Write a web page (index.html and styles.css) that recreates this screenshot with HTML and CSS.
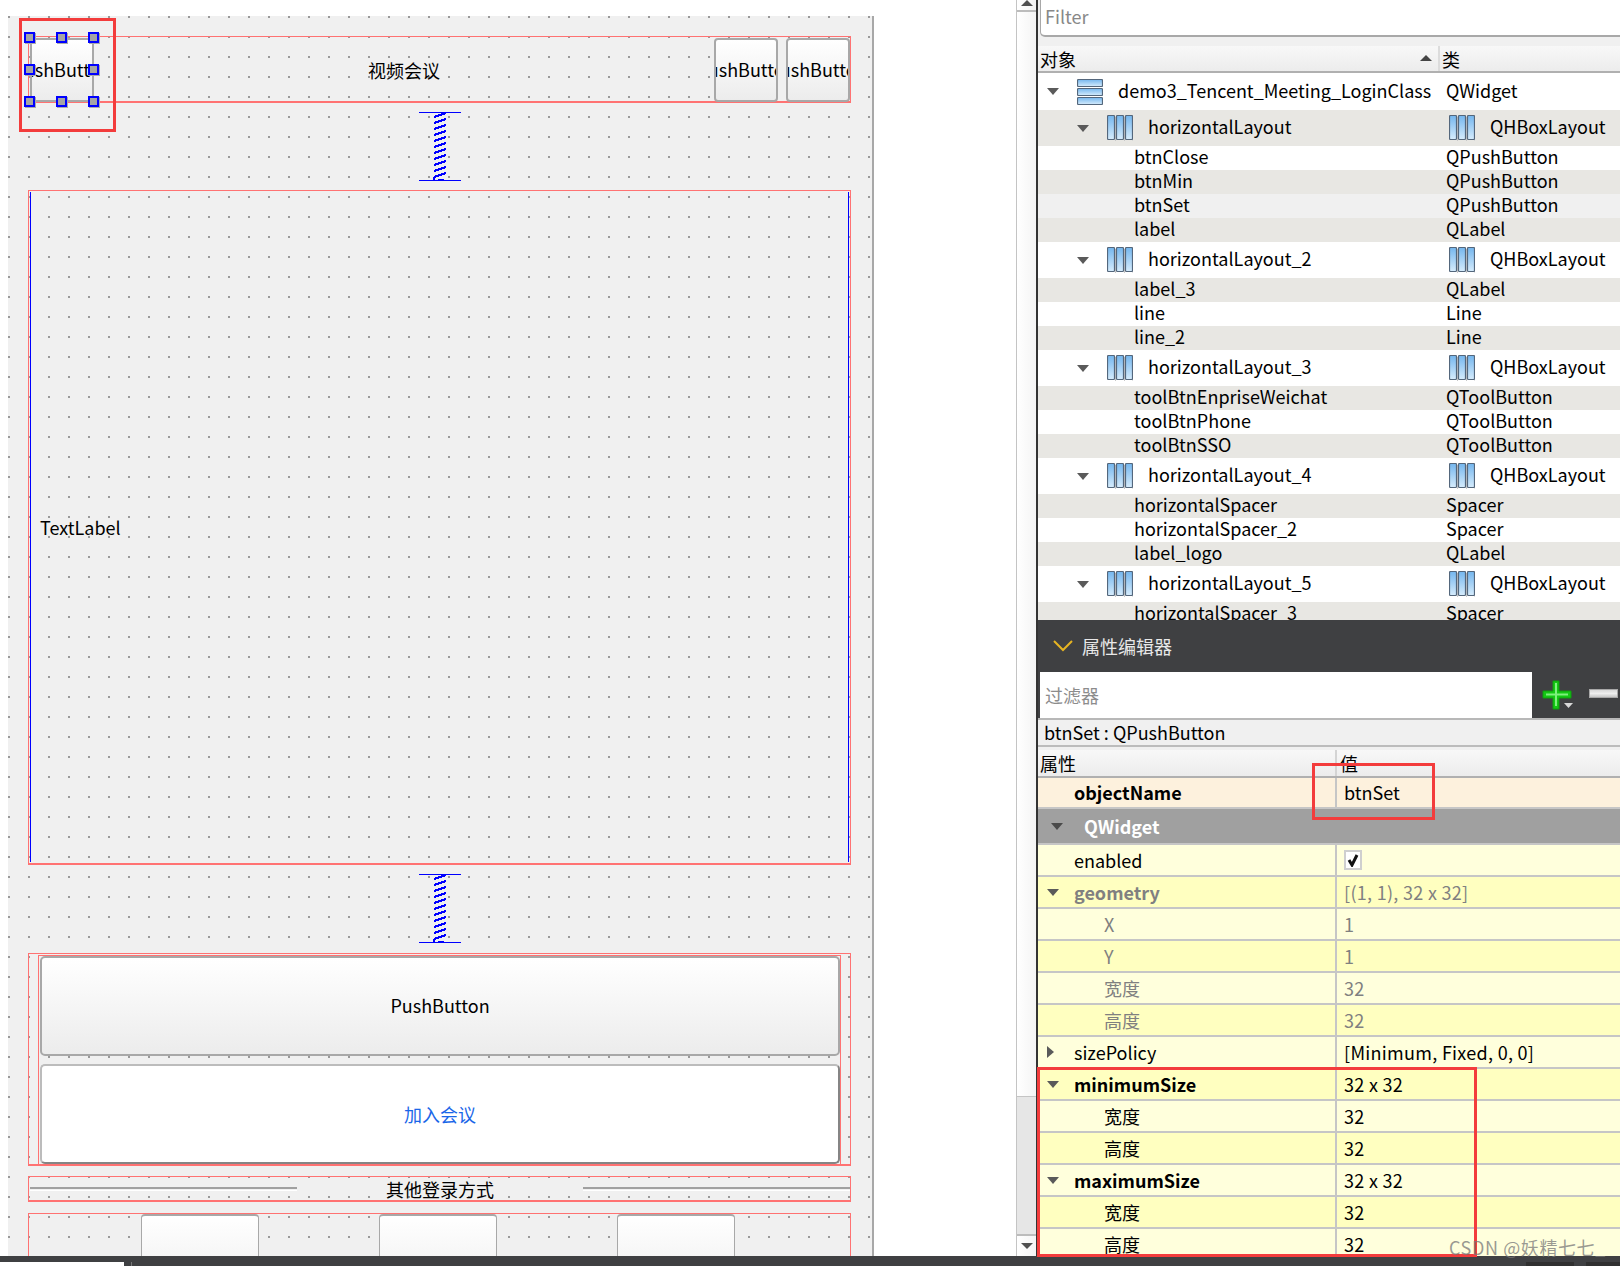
FILE: index.html
```html
<!DOCTYPE html>
<html lang="zh-CN">
<head>
    <meta charset="UTF-8">
    <title>Qt Designer</title>
    <link rel="stylesheet" href="styles.css">
</head>
<body>
    <svg class="defs" width="0" height="0">
        <defs>
            <linearGradient id="barH" x1="0" x2="0" y1="0" y2="1">
                <stop offset="0" stop-color="#74b6ee"/>
                <stop offset="1" stop-color="#d6ecfc"/>
            </linearGradient>
            <linearGradient id="barV" x1="0" x2="0" y1="0" y2="1">
                <stop offset="0" stop-color="#74b6ee"/>
                <stop offset="1" stop-color="#d6ecfc"/>
            </linearGradient>
            <symbol id="hbox" viewBox="0 0 26 26">
                <path d="M8.5 2V26M17.5 2V26M26 2V26" stroke="#c8c8c8" fill="none"/>
                <rect x="0.5" y="0.5" width="7" height="24" rx="1" fill="url(#barH)" stroke="#54677c" stroke-width="1.2"/>
                <rect x="9.5" y="0.5" width="7" height="24" rx="1" fill="url(#barH)" stroke="#54677c" stroke-width="1.2"/>
                <rect x="18.5" y="0.5" width="7" height="24" rx="1" fill="url(#barH)" stroke="#54677c" stroke-width="1.2"/>
            </symbol>
            <symbol id="vbox" viewBox="0 0 26 26">
                <rect x="0.5" y="0.5" width="25" height="7" rx="1" fill="url(#barV)" stroke="#54677c" stroke-width="1.2"/>
                <rect x="0.5" y="9.5" width="25" height="7" rx="1" fill="url(#barV)" stroke="#54677c" stroke-width="1.2"/>
                <rect x="0.5" y="18.5" width="25" height="7" rx="1" fill="url(#barV)" stroke="#54677c" stroke-width="1.2"/>
            </symbol>
            <symbol id="coil" viewBox="0 0 42 69">
                <path d="M0 0.5H42M0 68.5H42" stroke="#0000ff" fill="none"/>
                <path d="M15 5L27 1M15 11L27 7M15 17L27 13M15 23L27 19M15 29L27 25M15 35L27 31M15 41L27 37M15 47L27 43M15 53L27 49M15 59L27 55M15 65L27 61M15 65V68M19 68H25" stroke="#0000ff" stroke-width="2" fill="none" shape-rendering="crispEdges"/>
            </symbol>
        </defs>
    </svg>

    <div class="workspace">
        <!-- Form being edited -->
        <div class="form-area">
            <div class="form">
                <div class="title-layout">
                    <div class="selected">
                        <div class="push small"><span>PushButton</span></div>
                        <i class="handle h-tl"></i><i class="handle h-tc"></i><i class="handle h-tr"></i>
                        <i class="handle h-ml"></i><i class="handle h-mr"></i>
                        <i class="handle h-bl"></i><i class="handle h-bc"></i><i class="handle h-br"></i>
                    </div>
                    <div class="title-label">视频会议</div>
                    <div class="push small"><span>PushButton</span></div>
                    <div class="push small"><span>PushButton</span></div>
                </div>

                <svg class="spacer"><use href="#coil"/></svg>

                <div class="logo-layout">
                    <div class="logo-label">TextLabel</div>
                </div>

                <svg class="spacer spacer-low"><use href="#coil"/></svg>

                <div class="buttons-outer">
                    <div class="buttons-inner">
                        <div class="push big"><span>PushButton</span></div>
                        <div class="push big join"><span>加入会议</span></div>
                    </div>
                </div>

                <div class="other-layout">
                    <div class="other-line"></div>
                    <div class="other-label">其他登录方式</div>
                    <div class="other-line"></div>
                </div>

                <div class="tools-layout">
                    <div class="tool-btn"></div>
                    <div class="tool-btn"></div>
                    <div class="tool-btn"></div>
                </div>
            </div>
        </div>

        <!-- Scrollbar of the dock -->
        <div class="scrollbar">
            <div class="scroll-up"></div>
            <div class="scroll-track"></div>
            <div class="scroll-thumb"></div>
            <div class="scroll-down"></div>
        </div>

        <!-- Object inspector and property editor -->
        <div class="docks">
            <div class="inspector">
                <div class="filter-box"><div class="filter-input">Filter</div></div>
                <div class="head tree-head">
                    <div class="head-object">对象<i class="sort-arrow"></i></div>
                    <div class="head-class">类</div>
                </div>

                <div class="row root">
                    <div class="cell-name"><i class="arrow"></i><svg class="ico"><use href="#vbox"/></svg><span>demo3_Tencent_Meeting_LoginClass</span></div>
                    <div class="cell-class">QWidget</div>
                </div>
                <div class="row lay alt">
                    <div class="cell-name"><i class="arrow"></i><svg class="ico"><use href="#hbox"/></svg><span>horizontalLayout</span></div>
                    <div class="cell-class"><svg class="ico-class"><use href="#hbox"/></svg><span>QHBoxLayout</span></div>
                </div>
                <div class="row kid"><div class="cell-name">btnClose</div><div class="cell-class">QPushButton</div></div>
                <div class="row kid alt"><div class="cell-name">btnMin</div><div class="cell-class">QPushButton</div></div>
                <div class="row kid sel"><div class="cell-name">btnSet</div><div class="cell-class">QPushButton</div></div>
                <div class="row kid alt"><div class="cell-name">label</div><div class="cell-class">QLabel</div></div>
                <div class="row lay">
                    <div class="cell-name"><i class="arrow"></i><svg class="ico"><use href="#hbox"/></svg><span>horizontalLayout_2</span></div>
                    <div class="cell-class"><svg class="ico-class"><use href="#hbox"/></svg><span>QHBoxLayout</span></div>
                </div>
                <div class="row kid alt"><div class="cell-name">label_3</div><div class="cell-class">QLabel</div></div>
                <div class="row kid"><div class="cell-name">line</div><div class="cell-class">Line</div></div>
                <div class="row kid alt"><div class="cell-name">line_2</div><div class="cell-class">Line</div></div>
                <div class="row lay">
                    <div class="cell-name"><i class="arrow"></i><svg class="ico"><use href="#hbox"/></svg><span>horizontalLayout_3</span></div>
                    <div class="cell-class"><svg class="ico-class"><use href="#hbox"/></svg><span>QHBoxLayout</span></div>
                </div>
                <div class="row kid alt"><div class="cell-name">toolBtnEnpriseWeichat</div><div class="cell-class">QToolButton</div></div>
                <div class="row kid"><div class="cell-name">toolBtnPhone</div><div class="cell-class">QToolButton</div></div>
                <div class="row kid alt"><div class="cell-name">toolBtnSSO</div><div class="cell-class">QToolButton</div></div>
                <div class="row lay">
                    <div class="cell-name"><i class="arrow"></i><svg class="ico"><use href="#hbox"/></svg><span>horizontalLayout_4</span></div>
                    <div class="cell-class"><svg class="ico-class"><use href="#hbox"/></svg><span>QHBoxLayout</span></div>
                </div>
                <div class="row kid alt"><div class="cell-name">horizontalSpacer</div><div class="cell-class">Spacer</div></div>
                <div class="row kid"><div class="cell-name">horizontalSpacer_2</div><div class="cell-class">Spacer</div></div>
                <div class="row kid alt"><div class="cell-name">label_logo</div><div class="cell-class">QLabel</div></div>
                <div class="row lay">
                    <div class="cell-name"><i class="arrow"></i><svg class="ico"><use href="#hbox"/></svg><span>horizontalLayout_5</span></div>
                    <div class="cell-class"><svg class="ico-class"><use href="#hbox"/></svg><span>QHBoxLayout</span></div>
                </div>
                <div class="row kid alt"><div class="cell-name">horizontalSpacer_3</div><div class="cell-class">Spacer</div></div>
            </div>

            <div class="editor">
                <div class="dock-title">
                    <svg class="chevron" width="20" height="12" viewBox="0 0 20 12"><path d="M1 1L10 10L19 1" fill="none" stroke="#e6b422" stroke-width="2"/></svg>
                    <span>属性编辑器</span>
                </div>
                <div class="dock-filter">
                    <div class="filter-white">过滤器</div>
                    <svg class="plus" width="32" height="30" viewBox="0 0 32 30">
                        <path d="M11 1H17V11H29V18H17V29H11V18H1V11H11Z" fill="#14c814" stroke="#0f9e0f"/>
                        <path d="M14 3V26M4 14.5H26" stroke="#7df07d" stroke-width="2" fill="none"/>
                        <path d="M22 23H31L26.5 28Z" fill="#d8d8d8"/>
                    </svg>
                    <div class="minus"></div>
                </div>
                <div class="obj-name">btnSet : QPushButton</div>
                <div class="head prop-head">
                    <div class="head-prop">属性</div>
                    <div class="head-value">值</div>
                </div>

                <div class="prop object-name"><div class="prop-name bold no-arrow">objectName</div><div class="prop-value">btnSet</div></div>
                <div class="prop group"><i class="arrow"></i><span>QWidget</span></div>
                <div class="prop light"><div class="prop-name no-arrow">enabled</div><div class="prop-value"><span class="check"><svg width="12" height="14" viewBox="0 0 12 14"><path d="M2 7L5 12L10 2" fill="none" stroke="#111" stroke-width="3"/></svg></span></div></div>
                <div class="prop strong off"><div class="prop-name bold"><i class="arrow"></i><span>geometry</span></div><div class="prop-value">[(1, 1), 32 x 32]</div></div>
                <div class="prop light off"><div class="prop-name sub">X</div><div class="prop-value">1</div></div>
                <div class="prop strong off"><div class="prop-name sub">Y</div><div class="prop-value">1</div></div>
                <div class="prop light off"><div class="prop-name sub">宽度</div><div class="prop-value">32</div></div>
                <div class="prop strong off"><div class="prop-name sub">高度</div><div class="prop-value">32</div></div>
                <div class="prop light"><div class="prop-name"><i class="arrow closed"></i><span>sizePolicy</span></div><div class="prop-value">[Minimum, Fixed, 0, 0]</div></div>
                <div class="prop strong"><div class="prop-name bold"><i class="arrow"></i><span>minimumSize</span></div><div class="prop-value">32 x 32</div></div>
                <div class="prop light"><div class="prop-name sub">宽度</div><div class="prop-value">32</div></div>
                <div class="prop strong"><div class="prop-name sub">高度</div><div class="prop-value">32</div></div>
                <div class="prop light"><div class="prop-name bold"><i class="arrow"></i><span>maximumSize</span></div><div class="prop-value">32 x 32</div></div>
                <div class="prop strong"><div class="prop-name sub">宽度</div><div class="prop-value">32</div></div>
                <div class="prop light"><div class="prop-name sub">高度</div><div class="prop-value">32</div></div>
            </div>
        </div>
    </div>

    <div class="statusbar">
        <div class="status-white"></div>
        <div class="status-sep"></div>
        <div class="status-patch first-patch"></div>
        <div class="status-patch last-patch"></div>
    </div>

    <!-- Red marks drawn over the screenshot -->
    <div class="mark mark-button"></div>
    <div class="mark mark-name"></div>
    <div class="mark mark-size"></div>
    <div class="watermark">CSDN @妖精七七_</div>
</body>
</html>
```

FILE: styles.css
```css
/* Page */
body {
    margin: 0;
    width: 1620px;
    height: 1266px;
    overflow: hidden;
    position: relative;
    background: #fff;
    color: #000;
    font-family: "Noto Sans CJK SC", "Noto Sans", sans-serif;
    font-size: 18px;
    line-height: 24px;
}

.defs {
    position: absolute;
}

.workspace {
    display: flex;
    height: 1256px;
}

/* Form canvas */
.form-area {
    width: 1016px;
    padding: 16px 0 0 8px;
    box-sizing: border-box;
}

.form {
    width: 866px;
    height: 1240px;
    box-sizing: border-box;
    padding: 20px 21px 0 20px;
    border-right: 2px solid #a8a8a8;
    overflow: hidden;
    background-color: #f0f0f0;
    background-image: conic-gradient(from 270deg at 2px 2px, #999 25%, transparent 0);
    background-size: 20px 20px;
}

.title-layout {
    display: flex;
    height: 67px;
    box-sizing: border-box;
    padding: 1px 0 1px 1px;
    border: 1px solid #ff7272;
    border-bottom-width: 2px;
}

.title-label {
    flex: 1;
    text-align: center;
    line-height: 64px;
}

.push {
    display: flex;
    justify-content: center;
    align-items: center;
    box-sizing: border-box;
    overflow: hidden;
    white-space: nowrap;
    border: 2px solid #a8a8a8;
    border-radius: 4px;
    background: linear-gradient(#fff, #ececec);
}

.push.small {
    width: 64px;
    height: 64px;
    flex: none;
}

.push.small span {
    margin-bottom: 2px;
}

.push.small + .push.small {
    margin-left: 8px;
}

.selected {
    position: relative;
    width: 64px;
    height: 64px;
}

.selected .push {
    border-radius: 0;
}

.handle {
    position: absolute;
    width: 11px;
    height: 11px;
    box-sizing: border-box;
    border: 2px solid #0000ff;
    background: #a5a5a5;
    box-shadow: 1px 1px 0 #aaa;
}

.h-tl { left: -6px; top: -6px; }
.h-tc { left: 26px; top: -6px; }
.h-tr { left: 58px; top: -6px; }
.h-ml { left: -6px; top: 26px; }
.h-mr { left: 58px; top: 26px; }
.h-bl { left: -6px; top: 58px; }
.h-bc { left: 26px; top: 58px; }
.h-br { left: 58px; top: 58px; }

.spacer {
    display: block;
    width: 42px;
    height: 69px;
    margin: 9px 0 9px 391px;
}

.spacer-low {
    margin-bottom: 10px;
}

.logo-layout {
    height: 675px;
    box-sizing: border-box;
    padding: 1px;
    border: 1px solid #ff7272;
    border-bottom-width: 2px;
}

.logo-label {
    height: 100%;
    display: flex;
    align-items: center;
    padding-left: 9px;
    border-left: 1px solid #0000ff;
    border-right: 1px solid #0000ff;
}

.buttons-outer {
    height: 213px;
    box-sizing: border-box;
    padding: 1px 9px 0;
    border: 1px solid #ff7272;
    border-bottom-width: 2px;
}

.buttons-inner {
    display: flex;
    flex-direction: column;
    gap: 8px;
    height: 100%;
    box-sizing: border-box;
    padding-left: 1px;
    border: 1px solid #ff7272;
    border-bottom: 0;
}

.push.big {
    height: 100px;
    flex: none;
    border-radius: 5px;
}

.push.big span {
    margin-bottom: 2px;
}

.push.join {
    background: #fff;
    color: #1a66e8;
    border-color: #bcbcbc #858585 #858585 #bcbcbc;
}

.push.big.join span {
    margin-bottom: 0;
}

.other-layout {
    display: flex;
    height: 26px;
    margin-top: 10px;
    box-sizing: border-box;
    padding: 0 0 0 1px;
    border: 1px solid #ff7272;
    border-bottom-width: 2px;
}

.other-line {
    width: 267px;
    height: 1px;
    margin-top: 10px;
    border-top: 2px solid #a0a0a0;
    border-bottom: 1px solid #fff;
}

.other-label {
    flex: 1;
    text-align: center;
    line-height: 25px;
    white-space: nowrap;
}

.tools-layout {
    display: flex;
    gap: 120px;
    height: 100px;
    margin-top: 11px;
    box-sizing: border-box;
    padding-left: 112px;
    border: 1px solid #ff7272;
}

.tool-btn {
    width: 118px;
    height: 90px;
    box-sizing: border-box;
    border: 1px solid #a8a8a8;
    border-top-width: 2px;
    border-radius: 4px;
    background: linear-gradient(#fff, #ececec);
}

/* Scrollbar next to the docks */
.scrollbar {
    display: flex;
    flex-direction: column;
    width: 20px;
    box-sizing: border-box;
    border-left: 1px solid #c4c4c4;
    background: linear-gradient(to right, #fff, #f4f4f4);
}

.scroll-up {
    height: 10px;
    border-bottom: 2px solid #bcbcbc;
    position: relative;
}

.scroll-up::after {
    content: "";
    position: absolute;
    left: 4px;
    top: 0;
    border: 6px solid transparent;
    border-top: 0;
    border-bottom-color: #505050;
}

.scroll-track {
    flex: 1;
}

.scroll-thumb {
    height: 140px;
    background: #e6e6e6;
    border-top: 1px solid #c4c4c4;
    border-bottom: 2px solid #bcbcbc;
    box-sizing: border-box;
}

.scroll-down {
    height: 20px;
    position: relative;
}

.scroll-down::after {
    content: "";
    position: absolute;
    left: 4px;
    top: 7px;
    border: 6px solid transparent;
    border-bottom: 0;
    border-top-color: #505050;
}

/* Docks */
.docks {
    flex: 1;
    min-width: 0;
    border-left: 2px solid #333;
    background: #f0f0f0;
}

.inspector {
    height: 620px;
    overflow: hidden;
    background: #fff;
}

.filter-box {
    height: 46px;
    padding-left: 2px;
    box-sizing: border-box;
    background: #f0f0f0;
}

.filter-input {
    height: 37px;
    box-sizing: border-box;
    padding-left: 4px;
    line-height: 32px;
    color: #888;
    background: #fff;
    border-left: 1px solid #a8a8a8;
    border-bottom: 2px solid #a8a8a8;
    border-bottom-left-radius: 5px;
}

.head {
    display: flex;
    box-sizing: border-box;
    border-bottom: 2px solid #b0b0b0;
    background: linear-gradient(#f8f8f8, #ececec);
}

.tree-head {
    height: 27px;
}

.head-object {
    position: relative;
    width: 402px;
    box-sizing: border-box;
    padding-left: 2px;
    line-height: 26px;
    border-right: 2px solid #dcdcdc;
}

.sort-arrow {
    position: absolute;
    right: 6px;
    top: 9px;
    border: 6px solid transparent;
    border-top: 0;
    border-bottom-color: #444;
}

.head-class {
    padding-left: 2px;
    line-height: 26px;
}

.row {
    display: flex;
    align-items: center;
    height: 24px;
    background: #fff;
}

.row.alt {
    background: #e8e7e3;
}

.row.sel {
    background: #f0f0f0;
}

.row.root {
    height: 37px;
}

.row.lay {
    height: 36px;
}

.cell-name {
    display: flex;
    align-items: center;
    width: 408px;
    flex: none;
    box-sizing: border-box;
    white-space: nowrap;
}

.root .cell-name {
    padding-left: 9px;
}

.lay .cell-name {
    padding-left: 39px;
}

.kid .cell-name {
    padding-left: 96px;
    padding-bottom: 4px;
}

.kid .cell-class,
.root .cell-class {
    padding-bottom: 4px;
}

.cell-name span,
.cell-class span {
    margin-bottom: 4px;
}

.cell-class {
    display: flex;
    align-items: center;
    white-space: nowrap;
}

.ico {
    width: 26px;
    height: 26px;
    margin: 0 15px 0 18px;
    flex: none;
}

.ico-class {
    width: 26px;
    height: 26px;
    margin: 0 15px 0 3px;
    flex: none;
}

.arrow {
    flex: none;
    width: 0;
    height: 0;
    border-left: 6px solid transparent;
    border-right: 6px solid transparent;
    border-top: 7px solid #5a5a5a;
}

.arrow.closed {
    border-top: 6px solid transparent;
    border-bottom: 6px solid transparent;
    border-left: 7px solid #5a5a5a;
    border-right: 5px solid transparent;
}

/* Property editor */
.editor {
    height: 636px;
    overflow: hidden;
}

.dock-title {
    display: flex;
    align-items: center;
    height: 52px;
    padding-left: 15px;
    color: #e8e8e8;
    background: #3f4042;
}

.chevron {
    margin-right: 9px;
}

.dock-filter {
    display: flex;
    align-items: center;
    height: 46px;
    padding-left: 2px;
    background: #3f4042;
}

.filter-white {
    width: 492px;
    height: 46px;
    flex: none;
    box-sizing: border-box;
    padding-left: 5px;
    line-height: 46px;
    color: #8c8c8c;
    background: #fff;
}

.plus {
    margin-left: 10px;
}

.minus {
    width: 29px;
    height: 9px;
    margin: -3px 0 0 15px;
    box-sizing: border-box;
    border: 1px solid #a8a8a8;
    background: linear-gradient(#d8d8d8, #eee 50%, #c8c8c8);
}

.obj-name {
    height: 29px;
    box-sizing: border-box;
    padding-left: 6px;
    line-height: 25px;
    border-top: 2px solid #b8b8b8;
    border-bottom: 2px solid #bcbcbc;
    background: #f0f0f0;
}

.prop-head {
    height: 28px;
    margin-top: 3px;
    line-height: 26px;
}

.head-prop {
    width: 299px;
    box-sizing: border-box;
    padding-left: 2px;
    border-right: 2px solid #d4d4d4;
}

.head-value {
    padding-left: 3px;
}

.prop {
    display: flex;
    height: 32px;
    box-sizing: border-box;
    border-bottom: 2px solid #c6c6c6;
}

.prop.light {
    background: #ffffdc;
}

.prop.strong {
    background: #ffffc0;
}

.prop.object-name {
    height: 31px;
    background: #fdf1dd;
}

.prop.object-name .prop-name,
.prop.object-name .prop-value {
    padding-bottom: 2px;
    letter-spacing: 0;
}

.prop.group {
    height: 36px;
    align-items: center;
    padding-left: 13px;
    color: #fff;
    font-weight: 700;
    background: #a0a0a0;
}

.prop.group .arrow {
    border-top-color: #4a4a4a;
    margin-right: 21px;
}

.prop-name {
    display: flex;
    align-items: center;
    width: 299px;
    flex: none;
    box-sizing: border-box;
    padding-left: 9px;
    border-right: 2px solid #c6c6c6;
}

.prop-name .arrow {
    margin-right: 15px;
}

.prop-name.no-arrow {
    padding-left: 36px;
}

.prop-name.sub {
    padding-left: 66px;
}

.prop-name.bold {
    font-weight: 700;
}

.prop-value {
    display: flex;
    align-items: center;
    padding-left: 7px;
    letter-spacing: 0.3px;
}

.prop.off .prop-name,
.prop.off .prop-value {
    color: #808080;
}

.check {
    display: flex;
    align-items: center;
    justify-content: center;
    width: 18px;
    height: 20px;
    box-sizing: border-box;
    border: 2px solid #cfcfcf;
    background: #fff;
}

/* Bottom bar */
.statusbar {
    display: flex;
    align-items: flex-end;
    height: 10px;
    background: #3f4042;
}

.status-white {
    width: 124px;
    height: 4px;
    background: #fff;
}

.status-sep {
    width: 1px;
    height: 4px;
    margin-left: 7px;
    background: #777;
}

.status-patch {
    height: 4px;
    background: #303030;
}

.first-patch {
    width: 48px;
    margin-left: 1394px;
}

.last-patch {
    width: 34px;
    margin-left: 12px;
}

/* Red annotation boxes */
.mark {
    position: absolute;
    box-sizing: border-box;
    border: 3px solid #f33c3c;
}

.mark-button {
    left: 19px;
    top: 18px;
    width: 97px;
    height: 114px;
}

.mark-name {
    left: 1312px;
    top: 763px;
    width: 123px;
    height: 57px;
}

.mark-size {
    left: 1037px;
    top: 1067px;
    width: 440px;
    height: 190px;
}

.watermark {
    position: absolute;
    left: 1449px;
    top: 1235px;
    color: rgba(120, 120, 120, 0.75);
    white-space: nowrap;
    letter-spacing: 0.6px;
}
```
